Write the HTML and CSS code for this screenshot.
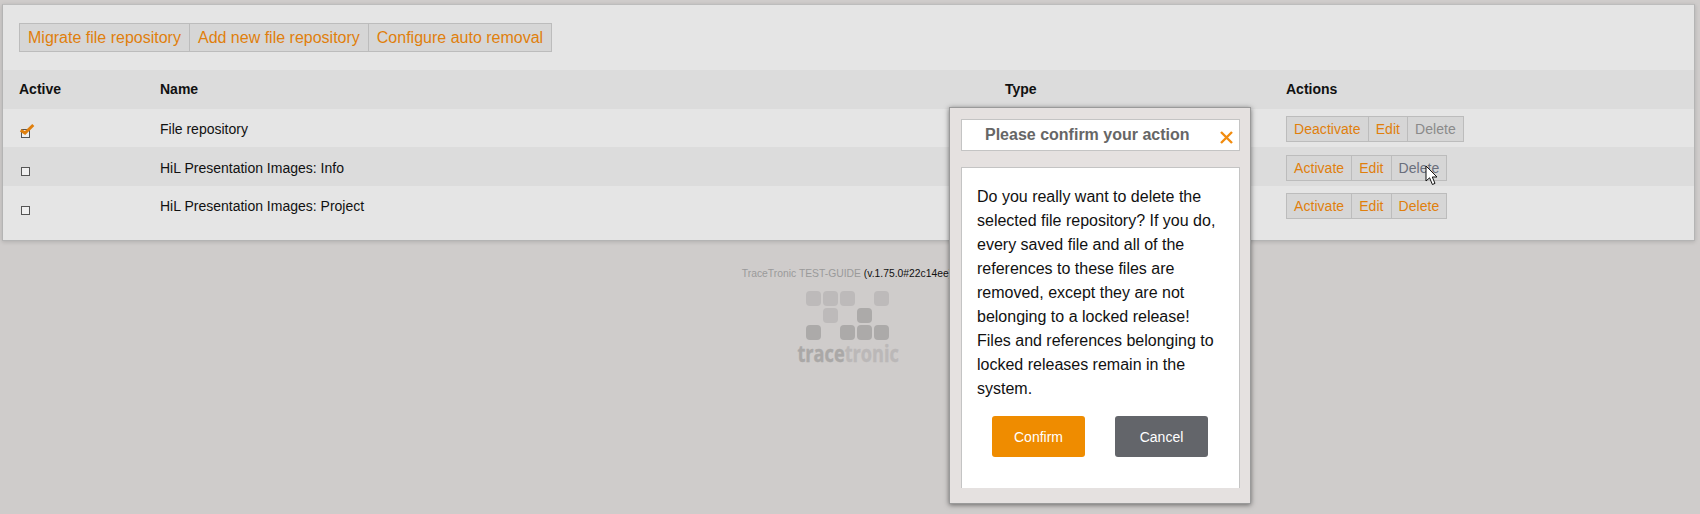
FILE: index.html
```html
<!DOCTYPE html>
<html lang="en">
<head>
<meta charset="utf-8">
<title>File repositories</title>
<link rel="stylesheet" href="styles.css">
</head>
<body>
<main class="panel">
  <div class="toolbar">
    <div class="btn-group large">
      <a class="btn">Migrate file repository</a><a class="btn">Add new file repository</a><a class="btn">Configure auto removal</a>
    </div>
  </div>
  <table class="repos">
    <thead>
      <tr><th class="c-active">Active</th><th class="c-name">Name</th><th class="c-type">Type</th><th class="c-actions">Actions</th></tr>
    </thead>
    <tbody>
      <tr class="row-first">
        <td class="check-cell"><span class="check">
          <svg class="tick" width="18" height="14" viewBox="0 0 18 14"><path d="M2.7 8.2 L7 11 L15.3 3" fill="none" stroke="#e07f0c" stroke-width="3"/></svg>
        </span></td>
        <td class="name-cell">File repository</td><td></td>
        <td class="act-cell"><div class="btn-group"><a class="btn">Deactivate</a><a class="btn">Edit</a><a class="btn muted">Delete</a></div></td>
      </tr>
      <tr class="row-alt">
        <td class="check-cell"><span class="check"></span></td>
        <td class="name-cell">HiL Presentation Images: Info</td><td></td>
        <td class="act-cell"><div class="btn-group"><a class="btn">Activate</a><a class="btn">Edit</a><a class="btn hover">Delete</a></div></td>
      </tr>
      <tr>
        <td class="check-cell"><span class="check"></span></td>
        <td class="name-cell">HiL Presentation Images: Project</td><td></td>
        <td class="act-cell"><div class="btn-group"><a class="btn">Activate</a><a class="btn">Edit</a><a class="btn">Delete</a></div></td>
      </tr>
    </tbody>
  </table>
</main>

<footer class="footer">
  <p class="version"><span class="brand">TraceTronic TEST-GUIDE</span> (v.1.75.0#22c14ee)</p>
  <div class="logo">
    <div class="logo-grid">
      <i></i><i></i><i></i><b></b><i></i>
      <b></b><i></i><b></b><i class="dark"></i><b></b>
      <i class="dark"></i><b></b><i class="dark"></i><i class="dark"></i><i class="dark"></i>
    </div>
    <div class="logo-word"><span>trace</span><span class="light">tronic</span></div>
  </div>
</footer>

<section class="modal">
  <header class="modal-title">
    <h2>Please confirm your action</h2>
    <svg class="close" width="15" height="15" viewBox="0 0 15 15"><path d="M2 2 L13 13 M13 2 L2 13" stroke="#f28c0f" stroke-width="2.4" fill="none"/></svg>
  </header>
  <div class="modal-body">
    <p>Do you really want to delete the selected file repository? If you do, every saved file and all of the references to these files are removed, except they are not belonging to a locked release! Files and references belonging to locked releases remain in the system.</p>
    <div class="modal-actions">
      <button class="action confirm">Confirm</button>
      <button class="action cancel">Cancel</button>
    </div>
  </div>
</section>

<svg class="cursor" width="14" height="21" viewBox="0 0 14 21"><path d="M1 1 V16 L4.6 12.8 L7.4 19.5 L10 18.4 L7.3 12 H12 Z" fill="#fff" stroke="#111" stroke-width="1"/></svg>
</body>
</html>
```
FILE: styles.css
```css
* { box-sizing: border-box; }
html, body { height: 100%; }
body {
  margin: 0;
  background: #cfcccb;
  font-family: "Liberation Sans", Arial, sans-serif;
  color: #111;
  overflow: hidden;
  position: relative;
}
.panel {
  margin: 4px 5px 0 2px;
  height: 237px;
  background: #e5e5e5;
  border: 1px solid #b4b4b4;
  border-top-color: #bdbdbd;
  box-shadow: 0 1px 4px rgba(0,0,0,.15);
}
.toolbar { padding: 18px 16px 18px; height: 65px; }
.btn-group {
  display: inline-flex;
  background: #d6d6d6;
  border: 1px solid #bcbcbc;
  height: 26px;
  font-size: 14px;
  align-items: stretch;
}
.btn-group.large { height: 29px; font-size: 16px; }
.btn {
  display: flex;
  align-items: center;
  padding: 0 7px;
  color: #e07f0c;
  border-left: 1px solid #bcbcbc;
}
.btn:first-child { border-left: 0; }
.large .btn { padding: 0 8px; }
.btn.muted { color: #8a8a8a; }
.btn.hover { color: #6a6f7c; }
.repos {
  width: 100%;
  border-collapse: collapse;
  table-layout: fixed;
  font-size: 14px;
}
.repos th {
  height: 39px;
  background: #dcdcdc;
  text-align: left;
  font-weight: bold;
  padding: 0 0 2px 15px;
}
.repos th.c-active { width: 142px; padding-left: 16px; }
.c-name { width: 845px; }
.c-type { width: 281px; }
.repos td { padding: 0; height: 39px; vertical-align: top; }
.repos .row-first td { height: 38px; }
.repos .row-alt td { background: #dcdcdc; }
.repos .name-cell { padding: 12px 0 0 15px; line-height: 16px; }
.repos .row-alt .name-cell { padding-top: 13px; }
.repos .check-cell { padding: 20px 0 0 18px; }
.check {
  display: block;
  position: relative;
  width: 9px;
  height: 9px;
  border: 1px solid #555;
  background: #f0f0f0;
}
.tick { position: absolute; left: -4px; top: -8px; }
.repos .act-cell { padding: 7px 0 0 15px; letter-spacing: .05px; }
.repos .row-alt .act-cell { padding-top: 8px; }
.footer {
  margin-top: 27px;
  display: flex;
  flex-direction: column;
  align-items: center;
}
.version { margin: 0 6px 0 0; font-size: 10.35px; line-height: 12px; color: #111; }
.brand { color: #9a9a9a; }
.logo { display: flex; flex-direction: column; align-items: center; margin: 11px 4px 0 0; }
.logo-grid {
  display: grid;
  grid-template-columns: repeat(5, 15px);
  grid-auto-rows: 15px;
  gap: 2px;
}
.logo-grid i { background: #bdbaba; border-radius: 4px; }
.logo-grid i.dark { background: #acaaa9; }
.logo-word {
  font-family: "Open Sans", sans-serif;
  font-weight: 700;
  font-size: 23px;
  line-height: 24px;
  margin-top: 1px;
  color: #aaa8a7;
  transform: scaleX(.79);
  white-space: nowrap;
  -webkit-text-stroke: .4px currentColor;
}
.logo-word .light { color: #bbb8b8; }
.modal {
  position: absolute;
  left: 949px;
  top: 107px;
  width: 302px;
  height: 397px;
  background: #e5e1e0;
  border: 1px solid #9a9a9a;
  box-shadow: 0 1px 5px rgba(0,0,0,.5);
  padding: 11px 10px 15px 11px;
  display: flex;
  flex-direction: column;
}
.modal-title {
  height: 32px;
  background: #fff;
  border: 1px solid #c4c4c4;
  display: flex;
  align-items: center;
  position: relative;
  flex: none;
}
.modal-title h2 {
  margin: 0 0 0 23px;
  font-size: 16px;
  font-weight: bold;
  color: #666;
}
.close { position: absolute; right: 5px; top: 10px; }
.modal-body {
  margin-top: 16px;
  flex: 1;
  background: #fff;
  border: 1px solid #c4c4c4;
  border-bottom: 0;
  padding: 17px 15px 0;
}
.modal-body p {
  margin: 0;
  font-size: 16px;
  line-height: 24px;
  color: #111;
}
.modal-actions {
  display: flex;
  justify-content: space-between;
  padding: 0 16px 0 15px;
  margin-top: 15px;
}
.action {
  width: 93px;
  height: 41px;
  border: 0;
  border-radius: 3px;
  color: #fff;
  font-family: inherit;
  font-size: 14px;
}
.confirm { background: #ef8c00; }
.cancel { background: #63656a; }
.cursor { position: absolute; left: 1425px; top: 165px; }
```
